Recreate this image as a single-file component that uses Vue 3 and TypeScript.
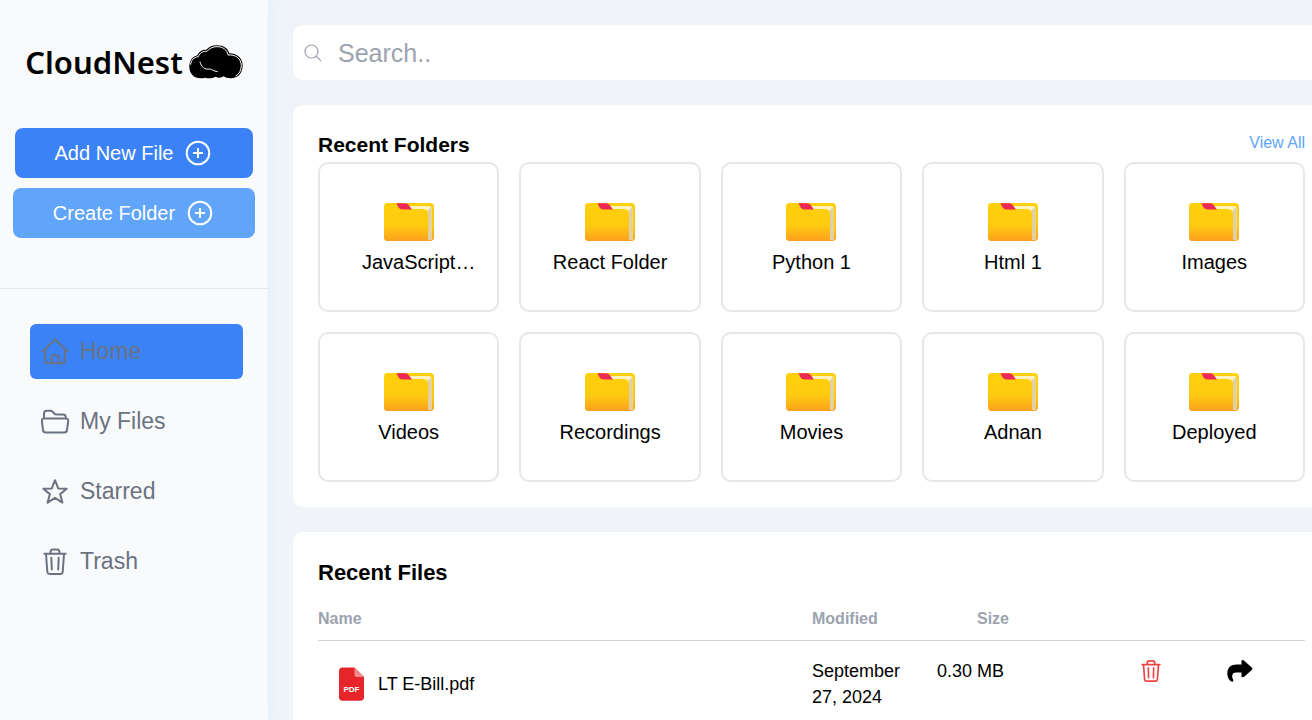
<script setup lang="ts">
import { ref } from 'vue'

interface NavItem { id: string; label: string }
interface FileRow { name: string; modified: string; size: string }

const nav: NavItem[] = [
  { id: 'home', label: 'Home' },
  { id: 'files', label: 'My Files' },
  { id: 'starred', label: 'Starred' },
  { id: 'trash', label: 'Trash' },
]
const active = ref('home')
const query = ref('')

const folders: string[] = [
  'JavaScript Folder', 'React Folder', 'Python 1', 'Html 1', 'Images',
  'Videos', 'Recordings', 'Movies', 'Adnan', 'Deployed',
]
const files: FileRow[] = [
  { name: 'LT E-Bill.pdf', modified: 'September 27, 2024', size: '0.30 MB' },
]
</script>

<template>
  <div class="page">
    <aside class="sidebar">
      <div class="logo">
        <span class="brand">CloudNest</span>
        <svg class="cloud" viewBox="0 0 162 100" aria-hidden="true">
          <path d="M36 99C14 99 1 84 1 65C1 47 9 34 25 30C30 18 40 12 52 13C60 4 71 0 84 0C104 0 117 9 121 24C145 24 161 39 161 60C161 83 148 99 124 99C115 99 109 97 104 93C98 98 88 99 80 94C68 100 56 100 48 97Q42 99 36 99Z" />
          <path class="line" d="M5 58C6 44 14 36 28 34C33 22 42 17 54 18C62 8 72 4 84 4C102 4 114 13 117 29C140 27 156 40 157 60C157 75 150 87 140 92" />
          <path class="line" d="M33 49C36 64 47 74 62 71C70 72 72 77 86 79" />
        </svg>
      </div>
      <div class="actions">
        <button v-for="label in ['Add New File', 'Create Folder']" :key="label" type="button" class="action" :class="{ light: label === 'Create Folder' }">
          {{ label }}
          <svg viewBox="0 0 30 30" aria-hidden="true"><circle cx="15" cy="15" r="11.3" /><path d="M15 10v10M10 15h10" /></svg>
        </button>
      </div>
      <nav class="nav">
        <a v-for="item in nav" :key="item.id" href="#" class="link" :class="{ active: item.id === active }" @click.prevent="active = item.id">
          <svg viewBox="0 0 30 30" aria-hidden="true">
            <path v-if="item.id === 'home'" d="M2.5 14.5L15 2.2L27.5 14.5M5.2 12.3V24.5Q5.2 26.3 7 26.3H23Q24.8 26.3 24.8 24.5V12.3M11.5 26V19.5Q11.5 18.3 12.7 18.3H17.3Q18.5 18.3 18.5 19.5V26" />
            <path v-else-if="item.id === 'files'" d="M4 11V6.6Q4 3.8 6.8 3.8H10.6Q11.6 3.8 12.4 4.5L14.6 6.8Q15.2 7.5 16.4 7.5H23Q25.6 7.5 25.8 10V11.5M4.2 11.5H25.8Q28.5 11.5 28.2 14.2L27 23.2Q26.700 25.500 24.300 25.500H5.700Q3.300 25.500 3 23.200L1.900 14.200Q1.600 11.500 4.200 11.500Z" />
            <path v-else-if="item.id === 'starred'" d="M15 3.200L18.200 11.400L26.700 11.800L20.100 17.100L22.400 25.600L15 20.800L7.600 25.600L9.900 17.100L3.300 11.800L11.800 11.400Z" />
            <path v-else d="M4.300 6.800H25.700M6 7L7.300 24.800Q7.500 26.900 9.700 26.900H20.300Q22.500 26.900 22.700 24.800L24 7M10.500 6.500V5Q10.500 2.500 13 2.500H17Q19.500 2.500 19.500 5V6.500M11.300 10.800L11.800 22.500M18.700 10.800L18.200 22.500" />
          </svg>
          {{ item.label }}
        </a>
      </nav>
    </aside>

    <main class="main">
      <label class="search">
        <svg viewBox="0 0 20 20" aria-label="Search"><circle cx="8.5" cy="8.5" r="6.5" /><path d="M13 13L18 18" /></svg>
        <input v-model="query" type="text" placeholder="Search.." aria-label="Search">
      </label>

      <section class="panel">
        <header class="head">
          <h2>Recent Folders</h2>
          <a href="#" @click.prevent>View All</a>
        </header>
        <div class="grid">
          <button v-for="name in folders" :key="name" type="button" class="card">
            <svg viewBox="0 0 50 50" aria-hidden="true">
              <defs>
                <linearGradient id="folder-front" x1="0" y1="0" x2="0" y2="1">
                  <stop offset="0" stop-color="#ffd00c" /><stop offset=".6" stop-color="#ffca10" /><stop offset="1" stop-color="#fca01e" />
                </linearGradient>
              </defs>
              <rect x="0" y="6" width="50" height="38" rx="4" fill="url(#folder-front)" />
              <path d="M17 9H45Q47.5 9 47.5 11.5V43H40V12H20Z" fill="#fff3bd" />
              <path d="M44 13L47.5 10V43H43Z" fill="#ddd0aa" />
              <path d="M0 10Q0 6 4 6H15L20 12.5H40Q44 12.5 44 16.5V44H4Q0 44 0 40Z" fill="url(#folder-front)" />
              <path d="M12.5 6.2H21Q23.5 6.2 25 8.5L28 12.5H18.5Q15.5 12.5 14 9.500Z" fill="#ee2856" />
            </svg>
            <span class="name">{{ name }}</span>
          </button>
        </div>
      </section>

      <section class="panel files">
        <h2>Recent Files</h2>
        <table>
          <colgroup><col><col class="c-date"><col class="c-size"><col class="c-del"><col class="c-share"></colgroup>
          <thead>
            <tr><th>Name</th><th>Modified</th><th class="th-size">Size</th><td></td><td></td></tr>
          </thead>
          <tbody>
            <tr v-for="file in files" :key="file.name">
              <td class="td-name">
                <div class="file">
                  <svg class="pdf" viewBox="0 0 26 34" aria-hidden="true">
                    <path d="M4 .5H16.500L26 10V30Q26 33.800 22.300 33.800H4.500Q1 33.800 1 30V4.500Q1 .5 4.500 .5Z" fill="#e5252a" />
                    <path d="M16.500 .5L26 10H19Q16.500 10 16.500 7.500Z" fill="#f28a8c" />
                    <text x="13.500" y="25" text-anchor="middle">PDF</text>
                  </svg>
                  {{ file.name }}
                </div>
              </td>
              <td class="td-date">{{ file.modified }}</td>
              <td>{{ file.size }}</td>
              <td class="td-icon">
                <button type="button" aria-label="Delete">
                  <svg class="del" viewBox="3 2 24 26" aria-hidden="true"><path d="M4.300 7.300H25.700M6 7.500L7.300 25.100Q7.500 27.200 9.700 27.200H20.300Q22.500 27.200 22.700 25.100L24 7.500M10.500 7V5.400Q10.500 2.900 13 2.900H17Q19.500 2.900 19.500 5.400V7M11.800 11.200L12.100 23M18.200 11.200L17.900 23" /></svg>
                </button>
              </td>
              <td class="td-icon td-share">
                <button type="button" aria-label="Share">
                  <svg class="share" viewBox="0 0 26 24" aria-hidden="true"><path d="M14.500 1.500Q15.500 .5 17 1.500L25 8.700Q26 9.700 25 10.700L17.500 17.500Q16 18.800 14.500 17.800V13.500H9C5.500 13.500 4.500 16.500 5.700 19.500Q7 22.500 5.500 22.800C3 22.300 .3 19 .3 14.500C.3 8.500 4 5.500 9.500 5.500H14.500Z" /></svg>
                </button>
              </td>
            </tr>
          </tbody>
        </table>
      </section>
    </main>
  </div>
</template>

<style>
body { margin: 0; }
</style>

<style scoped>
* { box-sizing: border-box; }
.page {
  display: flex;
  height: 100vh;
  overflow: hidden;
  background: #f0f4f9;
  color: #000;
  font-family: "Liberation Sans", Arial, sans-serif;
}
button { font: inherit; color: inherit; border: 0; background: none; padding: 0; cursor: pointer; }
a { text-decoration: none; }
h2 { margin: 0; font-weight: 700; }

.sidebar {
  flex: 0 0 268px;
  background: #f9fafc;
  box-shadow: 0 0 10px #dbeafe;
}
.logo {
  display: flex;
  align-items: center;
  justify-content: center;
  gap: 6px;
  height: 128px;
  padding-bottom: 4px;
}
.brand { font: 600 31px/40px "Noto Sans", sans-serif; }
.cloud { width: 54px; height: 34px; }
.cloud .line { fill: none; stroke: #fff; stroke-width: 3; }
.actions {
  display: flex;
  flex-direction: column;
  align-items: center;
  gap: 10px;
  padding-bottom: 50px;
  border-bottom: 1px solid #e5e7eb;
}
.action {
  display: flex;
  align-items: center;
  gap: 10px;
  height: 50px;
  padding: 0 40px;
  border-radius: 8px;
  background: #3b82f6;
  color: #fff;
  font-size: 20px;
}
.action.light { background: #60a5fa; }
.action svg { width: 30px; height: 30px; fill: none; stroke: #fff; stroke-width: 2; }
.nav {
  display: flex;
  flex-direction: column;
  gap: 15px;
  padding: 35px 25px 0 30px;
}
.link {
  display: flex;
  align-items: center;
  gap: 10px;
  height: 55px;
  padding: 0 10px;
  border-radius: 6px;
  color: #6b7280;
  font-size: 23px;
}
.link.active { background: #3b82f6; }
.link svg { width: 30px; height: 30px; fill: none; stroke: currentColor; stroke-width: 2; stroke-linejoin: round; stroke-linecap: round; }

.main {
  flex: 1;
  min-width: 0;
  display: flex;
  flex-direction: column;
  gap: 25px;
  padding: 25px 0 0 25px;
}
.search {
  display: flex;
  align-items: center;
  gap: 15px;
  height: 55px;
  flex-shrink: 0;
  padding: 0 10px;
  border-radius: 10px 0 0 10px;
  background: #fff;
}
.search svg { width: 20px; height: 20px; fill: none; stroke: #9ca3af; stroke-width: 1.2; }
.search input {
  flex: 1;
  min-width: 0;
  padding: 0;
  border: 0;
  outline: 0;
  background: none;
  font: 25px/36px "Liberation Sans", Arial, sans-serif;
}
.search input::placeholder { color: #9ca3af; opacity: 1; }

.panel {
  flex-shrink: 0;
  padding: 25px 7px 25px 25px;
  border-radius: 10px 0 0 10px;
  background: #fff;
}
.head { display: flex; justify-content: space-between; min-height: 32px; }
.head h2 { font-size: 21px; line-height: 30px; }
.head a { color: #60a5fa; font-size: 16px; line-height: 26px; }
.grid { display: grid; grid-template-columns: repeat(5, minmax(0, 1fr)); gap: 20px; }
.card {
  display: flex;
  flex-direction: column;
  align-items: center;
  justify-content: center;
  height: 150px;
  padding: 0 20px;
  border: 2px solid #e5e7eb;
  border-radius: 10px;
  font-size: 20px;
}
.card svg { width: 50px; height: 50px; }
.name {
  display: -webkit-box;
  -webkit-box-orient: vertical;
  -webkit-line-clamp: 1;
  overflow: hidden;
  width: 100%;
  line-height: 30px;
  text-align: center;
}

.files h2 { font-size: 22px; line-height: 32px; }
table { width: 100%; margin-top: 10px; border-collapse: collapse; table-layout: fixed; font-size: 18px; line-height: 26px; }
.c-date { width: 125px; }
.c-size { width: 170px; }
.c-del { width: 88px; }
.c-share { width: 110px; }
th { padding: 7px 0 8px; color: #9ca3af; font-size: 16px; text-align: left; }
thead tr { border-bottom: 1px solid #d1d5db; }
.th-size { padding-left: 40px; }
td { padding: 0; vertical-align: top; }
tbody td { padding: 17px 0; }
.td-name { vertical-align: middle; }
.td-date { padding-right: 25px; }
.file { display: flex; align-items: center; gap: 14px; padding-left: 20px; }
.pdf { width: 26px; height: 34px; }
.pdf text { fill: #fff; font: 700 8px "Liberation Sans", Arial, sans-serif; }
.td-icon { text-align: center; }
.td-share { padding-right: 20px; }
.td-icon button { display: inline-flex; align-items: center; height: 26px; }
.del { width: 20px; height: 24px; fill: none; stroke: #ef4444; stroke-width: 2; stroke-linecap: round; }
.share { width: 26px; height: 24px; }
</style>
